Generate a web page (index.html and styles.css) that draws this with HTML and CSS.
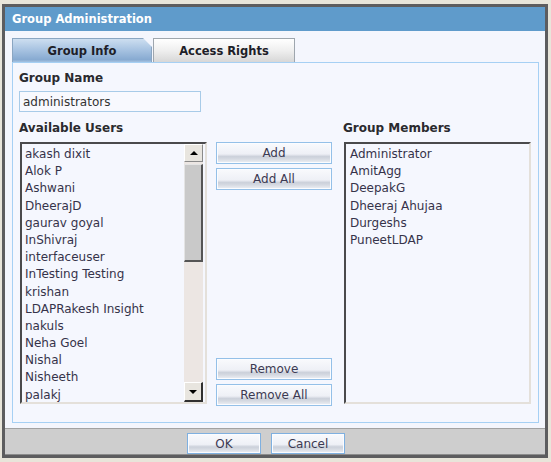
FILE: index.html
```html
<!DOCTYPE html>
<html>
<head>
<meta charset="utf-8">
<title>Group Administration</title>
<link rel="stylesheet" href="styles.css">
</head>
<body>
<div class="window">
  <div class="titlebar">Group Administration</div>
  <div class="content">
    <div class="tabs">
      <div class="tab active">Group Info</div>
      <div class="tab">Access Rights</div>
    </div>
    <div class="panel">
      <div class="label">Group Name</div>
      <div class="input">administrators</div>
      <div class="columns">
        <div class="col">
          <div class="label label-list">Available Users</div>
          <div class="listbox">
            <div class="items">
              <div class="item">akash dixit</div>
              <div class="item">Alok P</div>
              <div class="item">Ashwani</div>
              <div class="item">DheerajD</div>
              <div class="item">gaurav goyal</div>
              <div class="item">InShivraj</div>
              <div class="item">interfaceuser</div>
              <div class="item">InTesting Testing</div>
              <div class="item">krishan</div>
              <div class="item">LDAPRakesh Insight</div>
              <div class="item">nakuls</div>
              <div class="item">Neha Goel</div>
              <div class="item">Nishal</div>
              <div class="item">Nisheeth</div>
              <div class="item">palakj</div>
            </div>
            <div class="scrollbar">
              <div class="sb-btn"><span class="arrow-up"></span></div>
              <div class="sb-thumb"></div>
              <div class="sb-track"></div>
              <div class="sb-btn sb-down"><span class="arrow-down"></span></div>
            </div>
          </div>
        </div>
        <div class="buttons">
          <div class="btn-group">
            <button class="btn">Add</button>
            <button class="btn">Add All</button>
          </div>
          <div class="btn-group">
            <button class="btn">Remove</button>
            <button class="btn">Remove All</button>
          </div>
        </div>
        <div class="col">
          <div class="label label-list">Group Members</div>
          <div class="listbox">
            <div class="items members">
              <div class="item">Administrator</div>
              <div class="item">AmitAgg</div>
              <div class="item">DeepakG</div>
              <div class="item">Dheeraj Ahujaa</div>
              <div class="item">Durgeshs</div>
              <div class="item">PuneetLDAP</div>
            </div>
          </div>
        </div>
      </div>
    </div>
  </div>
  <div class="footer">
    <button class="btn fbtn">OK</button>
    <button class="btn fbtn">Cancel</button>
  </div>
</div>
</body>
</html>
```

FILE: styles.css
```css
* { box-sizing: border-box; }
html, body { margin: 0; padding: 0; }
body {
  background: #e8e5da;
  font-family: "DejaVu Sans", Verdana, sans-serif;
  font-size: 12px;
  color: #333;
  width: 551px;
  height: 462px;
  overflow: hidden;
}
.window {
  margin: 4px 0 0 2px;
  width: 546px;
  height: 454px;
  border: 3px solid #5d5d5f;
  display: flex;
  flex-direction: column;
}
.titlebar {
  height: 24px;
  background: #5f9bcb;
  color: #fff;
  font-weight: bold;
  font-size: 11.5px;
  line-height: 25px;
  padding-left: 7px;
}
.content {
  height: 397px;
  background: #f4f6fd;
  padding: 7px 6px 0 7px;
}
.tabs {
  display: flex;
  height: 24px;
}
.tab {
  height: 24px;
  line-height: 25px;
  text-align: center;
  font-weight: bold;
  font-size: 11.5px;
  color: #1e1e28;
  border: 1px solid #9ea6ae;
  border-bottom: none;
  background: linear-gradient(#ffffff, #efefef 50%, #d7d7d7);
  width: 142px;
  margin-left: 1px;
}
.tab.active {
  width: 140px;
  margin-left: 0;
  border-color: #8aa6c2;
  background: linear-gradient(#cddef0, #a9c4e2 45%, #87aad1 90%, #a6c2e0);
  clip-path: polygon(0 0, calc(100% - 9px) 0, 100% 9px, 100% 100%, 0 100%);
}
.panel {
  height: 361px;
  border: 1px solid #a6d0f4;
  background: #f5f7fe;
  padding: 7px 6px 0 6px;
}
.label {
  font-weight: bold;
  line-height: 16px;
  color: #2a2a2e;
}
.input {
  margin-top: 5px;
  width: 182px;
  height: 21px;
  border: 1px solid #a8cbe8;
  background: #f8f9fe;
  line-height: 20px;
  padding-left: 3px;
  color: #333;
}
.columns {
  display: flex;
  margin-top: 8px;
}
.col {
  width: 188px;
  display: flex;
  flex-direction: column;
}
.label-list {
  margin-bottom: 6px;
}
.listbox {
  margin-left: 1px;
  width: 187px;
  height: 262px;
  display: flex;
  border-top: 2px solid #4a4a4c;
  border-left: 2px solid #4a4a4c;
  border-right: 2px solid #e4e0da;
  border-bottom: 2px solid #e4e0da;
  background: #f5f7fe;
}
.items {
  flex: 1;
  overflow: hidden;
  padding: 2px 0 0 3px;
}
.members { padding-left: 4px; }
.item {
  line-height: 17.2px;
  height: 17.2px;
  white-space: nowrap;
  color: #35334a;
}
.scrollbar {
  width: 19px;
  margin-right: 2px;
  display: flex;
  flex-direction: column;
  background: #ece6e3;
}
.sb-btn {
  height: 18px;
  background: #e8e5df;
  border-top: 1px solid #ffffff;
  border-left: 1px solid #ffffff;
  border-right: 1px solid #8a8a8a;
  border-bottom: 1px solid #8a8a8a;
  display: flex;
  align-items: center;
  justify-content: center;
}
.sb-down {
  height: 20px;
  border-right: 2px solid #303030;
  border-bottom: 2px solid #303030;
}
.arrow-up, .arrow-down {
  width: 0;
  height: 0;
  border-left: 4px solid transparent;
  border-right: 4px solid transparent;
}
.arrow-up { border-bottom: 4px solid #000; }
.arrow-down { border-top: 4px solid #000; }
.sb-thumb {
  margin-top: 2px;
  height: 98px;
  background: #c9c9c9;
  border-top: 1px solid #e4e4e4;
  border-left: 1px solid #e4e4e4;
  border-right: 2px solid #555;
  border-bottom: 2px solid #555;
}
.sb-track { flex: 1; }
.buttons {
  margin-left: 9px;
  margin-top: 22px;
  height: 264px;
  width: 116px;
  display: flex;
  flex-direction: column;
  justify-content: space-between;
  margin-right: 11px;
}
.btn-group {
  display: flex;
  flex-direction: column;
  gap: 4px;
}
.btn {
  height: 22px;
  width: 116px;
  padding: 0;
  margin: 0;
  font-family: "DejaVu Sans", Verdana, sans-serif;
  font-size: 12px;
  color: #3c3a52;
  border: 1px solid #94c0e8;
  box-shadow: inset 0 0 0 1px #fbfcff;
  background: linear-gradient(#f9fafd 0%, #eef0f6 55%, #cbd0da 68%, #d6dae2 80%, #eef0f5 100%);
  line-height: 18px;
}
.footer {
  height: 27px;
  background: #cecece;
  border-top: 1px solid #a2a2a2;
  border-bottom: 1px solid #8c8c8c;
  display: flex;
  gap: 10px;
  padding: 4px 0 0 182px;
}
.fbtn {
  width: 74px;
  height: 21px;
  border-color: #7fb0e0;
}
```
